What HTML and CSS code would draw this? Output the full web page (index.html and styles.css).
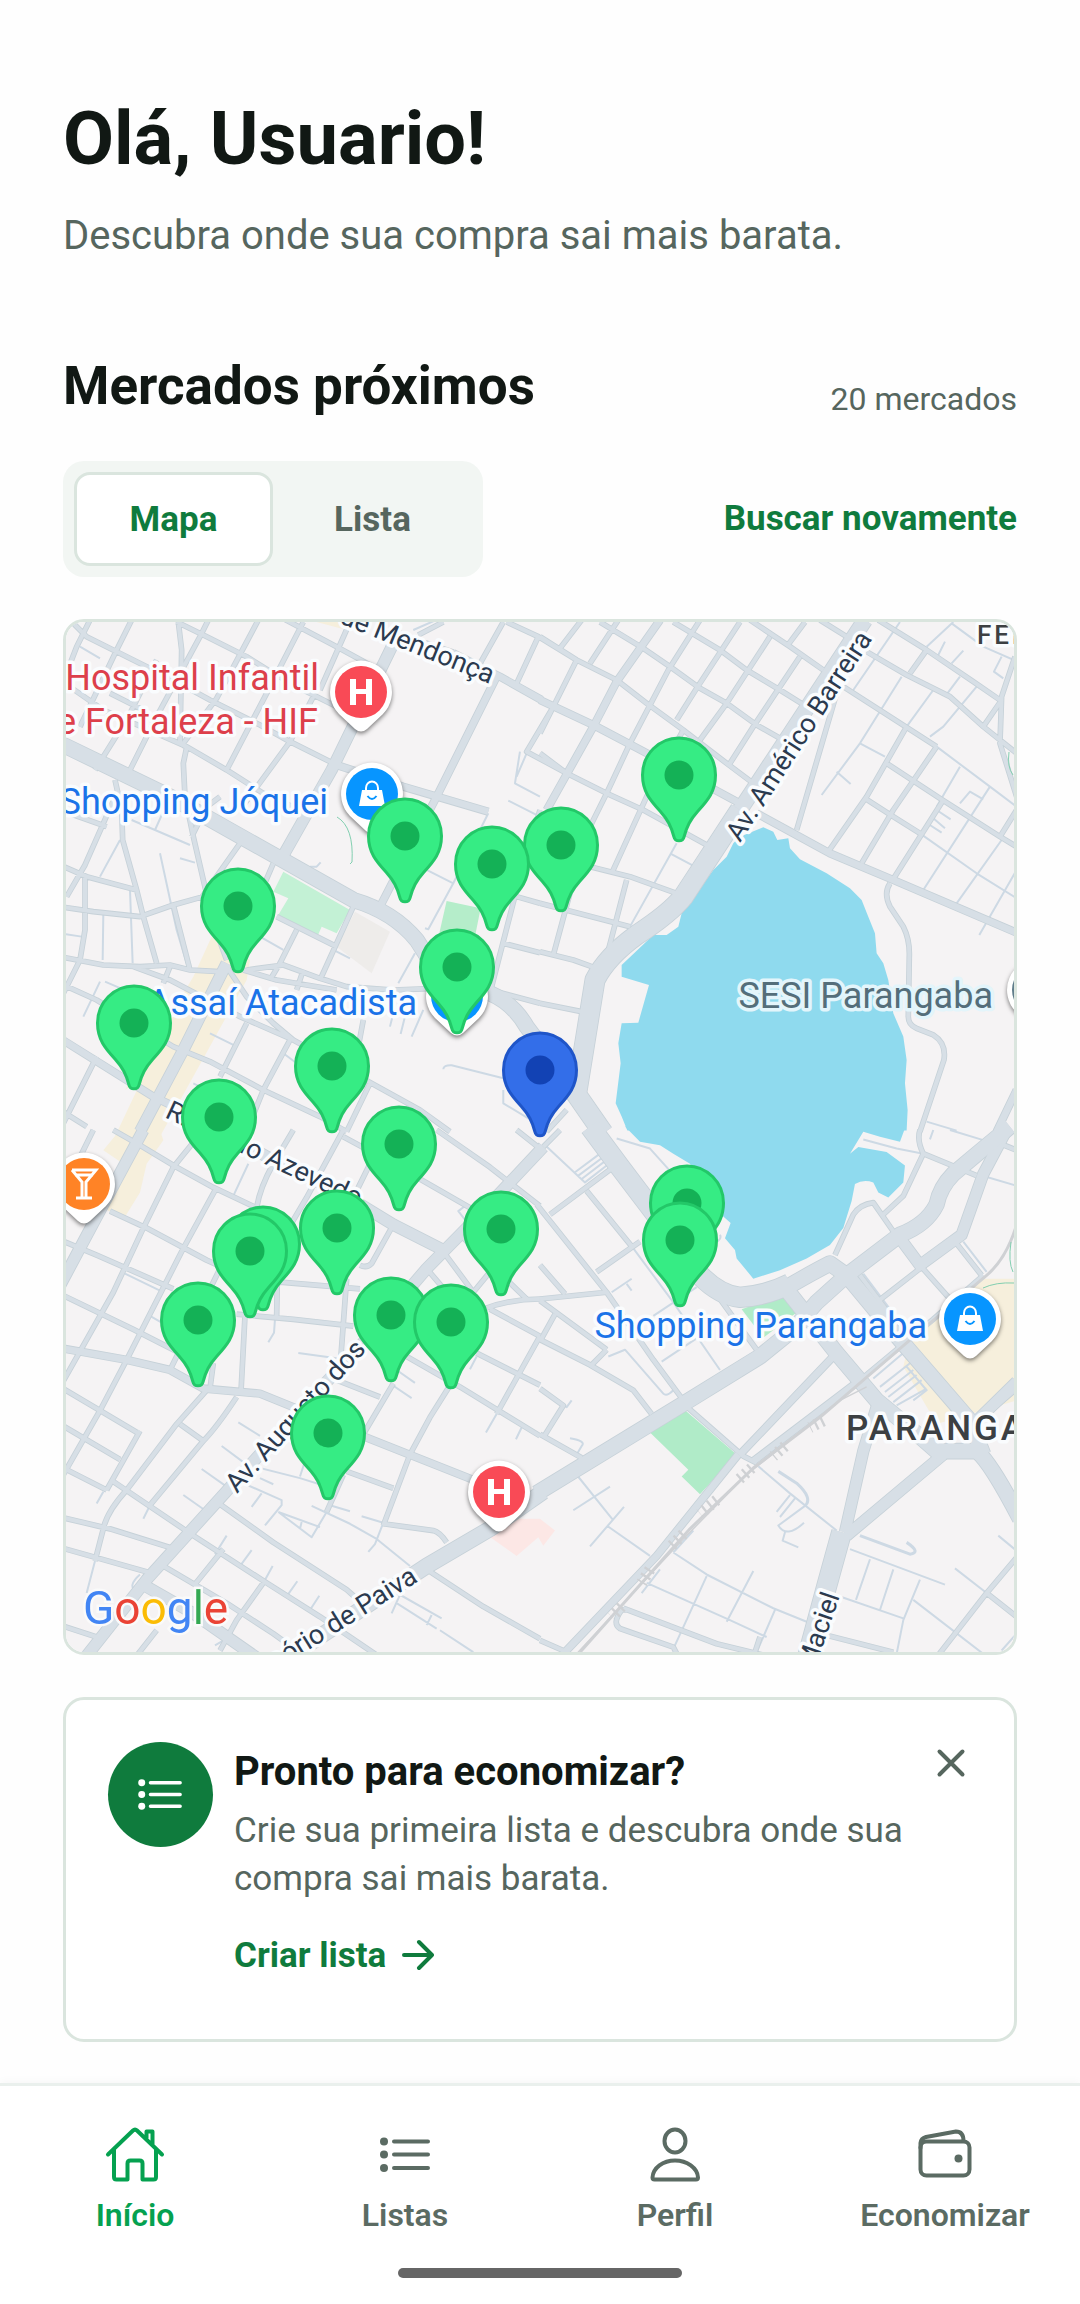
FILE: index.html
```html
<!DOCTYPE html>
<html lang="pt-BR">
<head>
<meta charset="utf-8">
<meta name="viewport" content="width=device-width, initial-scale=1">
<title>Início</title>
<link rel="stylesheet" href="styles.css">
</head>
<body>
<main class="content">
  <header class="greeting">
    <h1 class="greeting-title">Olá, Usuario!</h1>
    <p class="greeting-text">Descubra onde sua compra sai mais barata.</p>
  </header>

  <section class="markets">
    <div class="markets-head">
      <h2 class="markets-title">Mercados próximos</h2>
      <span class="markets-count">20 mercados</span>
    </div>
    <div class="markets-tools">
      <div class="segment">
        <button class="segment-button is-active" type="button" aria-pressed="true">Mapa</button>
        <button class="segment-button" type="button" aria-pressed="false">Lista</button>
      </div>
      <button class="text-button" type="button">Buscar novamente</button>
    </div>

    <div class="map">
      <svg class="map-canvas" viewBox="0 0 948 1030" role="img" aria-label="Mapa dos mercados próximos">
        <defs>
          <g id="roads">
            <!-- north-west -->
            <g transform="translate(-6 -12) scale(.3333)">
              <path class="r1" d="M0 0L80 80 170 125 340 210 450 270 600 345 690 395 820 460M350 36L430 75 560 140 640 190 730 240 900 325M640 10L830 110 940 170M0 210L130 300 380 410 500 480 610 550 720 600M0 240L50 110 90 30M60 350L170 120 215 30M105 480L205 320 290 150M210 480L290 320 420 80 445 30M370 400L470 265 595 30M500 480L620 250 730 36M540 600L690 395 760 260M780 240L870 36M355 36L365 120 360 400 380 412 370 460 375 560 400 680 430 810 460 940 500 1050M250 300L150 250M165 510L185 600 188 690 230 840 250 920 290 1060M0 890L100 905 240 920 340 885 430 860M20 860L75 765 130 640 165 560M0 765L80 800 230 840M75 800L75 960 60 1050 0 1170M0 600L140 650M0 1040L130 1065 240 1070 330 1065 390 1080 480 1085M340 885L390 1080M395 680L440 590 480 560M540 700L420 870M560 1080L670 1065 780 1105 860 1130 1000 1140 1130 1135M550 1080L650 1110 830 1140M650 920L830 1010M880 890L780 1110M710 960L660 1060 630 1110M730 1080L710 1140M220 1070L330 1110 540 1220 700 1290 880 1390 1080 1500 1170 1565M0 1120L110 1170 340 1310 450 1355 610 1440 780 1520 860 1565M500 1070L560 1160 640 1240 700 1290M330 1070L310 1120M560 1240L480 1400M690 1290L610 1440 560 1565M930 1420L860 1565M910 1230L880 1390M110 1340L0 1560M640 760L610 830M1330 36L1255 170M1075 75L1150 36M1290 1150L1380 800 1440 600M1370 860L1440 880M1330 1000L1440 1028M1290 1140L1440 1180M0 1500L80 1550"/>
              <path class="r2" d="M0 1285L280 1460 500 1565M1310 200L1130 560 960 890M830 465L1030 530 1285 605M1180 130L1320 200 1445 270M1000 70L1180 130"/>
              <path class="r3" d="M1020 60L815 480 665 745M500 1060L370 1320 240 1565"/>
              <path class="r4" d="M0 400L330 560 650 740 880 870Q1000 905 1070 990L1140 1100 1290 1150Q1360 1180 1400 1250L1445 1310"/>
            </g>
            <!-- north-east -->
            <g transform="translate(474 -12) scale(.3333)">
              <path class="r1" d="M-100 36L-5 80 110 150 230 210 320 280 430 360 560 460 640 520M-5 80L-70 220M110 150L40 290 -40 425 80 490 200 550 310 600 510 710M0 80L110 150M180 36L310 115 390 170 480 235 560 280 650 345 720 385M125 30L60 115M235 30L150 160M480 30L385 180 270 400 200 550 150 650M600 36L470 235 410 330M690 80L560 280 480 390M795 36L740 110M780 140L640 350 570 460M400 36L540 120 620 180 720 240 800 290M630 30L750 110 850 180M840 30L920 80M430 360L320 560 215 790M0 430L80 490M40 290L0 370M890 250L770 660M1015 30L1160 120 1300 215 1380 270M980 125L1100 195 1230 260 1330 350 1430 430M910 230L1050 320 1190 410M1190 410L1060 600 965 760M1100 350L980 560 865 725M1160 120L1110 190M1040 460L1200 565 1380 680 1430 710M975 565L1060 620 1140 670M1210 570L1055 815M1430 600L1380 680M1385 270L1330 350M1425 140L1385 260 1380 400 1430 560M150 770L270 800 410 850M0 880L270 950M0 1025L100 1050 170 1075M0 1180L125 1205M90 850L40 1035M260 810L200 1040M110 760L60 900M1050 820Q1030 850 1050 890L1090 950Q1110 990 1108 1040L1105 1220Q1105 1245 1130 1255L1180 1275Q1220 1300 1212 1350L1140 1565M20 1565L80 1500"/>
              <path class="r2" d="M0 270L160 345 340 440 600 580M360 30L230 215 160 350 20 600M650 610L870 730 1060 810 1430 968M1430 1440L1370 1565"/>
              <path class="r4" d="M975 30L600 600"/>
              <path class="r5" d="M600 600L430 860Q390 910 290 975 200 1040 165 1110L110 1450M100 1440L190 1570"/>
            </g>
            <!-- south-west -->
            <g transform="translate(-6 508) scale(.3333 .338)">
              <path class="r1" d="M150 240L260 290 440 385 530 425M0 325L110 370 340 470M0 485L220 590 360 660M160 0L240 45 350 110 460 170 600 235M0 760L120 830 240 900M0 870L180 975M0 995L140 1065M100 0L0 200M430 0L340 110 250 290 160 480 0 760M470 170L370 350 200 680 120 830 10 1020M560 250L420 530 330 710M590 230Q600 170 640 100L700 0M240 890L140 1065M440 770L350 870 200 1065Q140 1130 130 1180L105 1275M530 790Q470 880 430 920L270 1110M360 870L430 920M555 550L543 775M460 690L450 765M530 545L700 560 880 580M660 450L900 470M652 450L650 550M860 440L842 680M160 1040L400 1200 620 1340 780 1440 960 1560M470 1100L640 1220 860 1360 900 1395M0 1145L150 1180 345 1240M0 1235L270 1310M0 1465L110 1500M310 1290L500 1400 640 1490 750 1568M490 1240L400 1350M610 1340L530 1450 480 1540M290 1480L220 1568M830 740L960 790M1000 750L910 900M1180 740L1110 850 1050 960 970 1170M860 1010L1000 1060M970 1165L1120 1185Q1140 1190 1160 1220M850 1020L800 1130M1150 360L1240 480M1130 0L1290 110 1440 225M850 20L1000 100 1230 230M850 0L740 200 680 300M1000 280L935 395Q920 410 900 400M930 100L880 200M1240 480L1290 420M1270 530Q1350 500 1440 500M1290 530L1440 610M1250 660L1440 755M1040 670L1200 760 1440 905M1440 610L1310 840M1200 310L1400 500M1100 1300L1270 1410 1440 1505M1100 410L1160 480M1370 0L1440 55"/>
              <path class="r2" d="M0 645L200 680 330 710 430 765 600 780 700 820 920 910 1060 965 1240 1035"/>
              <path class="r3" d="M250 0L130 220 0 460M480 0L640 90 850 190 1000 280 1150 355M1450 50L1250 260 1100 410 900 640 700 850 480 1090 260 1330 70 1568M240 1340L400 1430 600 1568"/>
              <path class="r4" d="M640 1590L900 1420 1100 1290 1290 1180 1450 1070"/>
            </g>
            <!-- south-east -->
            <g transform="translate(474 508) scale(.3333 .338)">
              <path class="r1" d="M220 110L30 250M140 180L280 350M300 330L170 420M-10 220L200 480 340 680 430 800M0 500L200 480M0 400L75 485M0 505L200 650M0 620L150 695 280 770 335 840M200 650L150 700M0 765L70 815 10 910M0 900L125 970M45 545L0 625M540 500L650 650M885 370L940 250Q960 220 1000 215L1060 300M1140 0Q1130 30 1150 70L1090 195 1030 250M1150 70L1310 135M1140 400L1230 500M1010 510L1140 410M1245 330L1325 430M430 810L610 965 650 985M960 740L1180 560 1330 430M960 430L1060 560M265 1420L245 1420Q215 1460 240 1475L400 1530 420 1568M250 1415L530 1520 730 1568M1430 1265L1340 1370 1190 1560M1340 1370L1430 1440M0 1510L70 1540M660 1500L640 1560M860 1495L1060 1545M1380 40L1430 60M10 50L60 0"/>
              <path class="r2" d="M595 960L350 1260 60 1560M880 670L600 960M960 740L640 980M1430 760L1300 870"/>
              <path class="r3" d="M1400 0L1330 130 1265 310 1140 400 1080 320M1010 820L970 950 915 1190M1210 960L920 1200M1430 745L1290 880"/>
              <path class="r4" d="M730 460L890 660 1010 800Q1110 880 1190 950H1310Q1350 980 1440 1150M920 430L1080 620 1290 860 1330 960M-10 1075L430 810 660 670 760 590 830 510 920 430 1080 310Q1160 280 1190 220 1200 170 1240 130L1300 80 1410 -10M750 460Q820 420 870 395L920 430"/>
              <path class="r5" d="M150 -10L240 110 340 240 480 430Q540 490 600 495 680 490 750 455M905 1190L860 1350 800 1568"/>
            </g>
          </g>

          <g id="pin">
            <path d="M0-37C20-37 36.500-20.500 36.500 0 36.500 17 28 26 19 36 11 45 8 51 5 62 4 67-4 67-5 62-8 51-11 45-19 36-28 26-36.500 17-36.500 0-36.500-20.500-20-37 0-37Z"/>
            <circle class="pin-eye" r="14.500"/>
          </g>
          <path id="poi" d="M0-31.500A31.500 31.500 0 0 1 22 22L6 37Q0 42-6 37L-22 22A31.500 31.500 0 0 1 0-31.500Z"/>
          <g id="bag">
            <circle r="26"/>
            <path fill="#fff" d="M-10-4H10L13 12H-13Z"/>
            <path class="bag-line" stroke="#fff" d="M-6-4V-6A6 6.500 0 0 1 6-6V-4"/>
            <path class="bag-line" stroke="#0795ff" d="M-4.500 2Q0 8 4.500 2"/>
          </g>
        </defs>

        <rect class="ground" width="948" height="1030"/>

        <!-- parks, shopping areas and the lake -->
        <g transform="translate(-6 -12) scale(.3333)">
          <path fill="#c3f1d5" d="M670 785L870 900 830 970 785 950 770 985 655 915 685 865 640 845Z"/>
          <path fill="#b5edca" d="M1160 873L1262 895 1245 980 1138 970Z"/>
          <path fill="#eeecea" d="M885 905L990 965 935 1090 830 1010Z"/>
          <path fill="#f6efdc" d="M455 980L570 1050 560 1110 400 1400 300 1580H165L250 1400 195 1440 400 1100ZM770 36H860V60Z"/>
        </g>
        <g transform="translate(-6 508) scale(.3333 .338)">
          <path fill="#f6efdc" d="M180 0H300L310 30 260 100 240 185 190 265 130 230 190 100 130 60Z"/>
          <path fill="#fce7e5" d="M1270 1190L1340 1150 1440 1150 1485 1185 1450 1230 1435 1205 1370 1260Z"/>
        </g>
        <g transform="translate(474 508) scale(.3333 .338)">
          <path fill="#b0ebc8" d="M320 885L430 825 590 960 480 1078 425 1025 445 1005ZM605 530L725 488 770 540 670 615Z"/>
          <path fill="#f6efdc" d="M1330 440H1430V800L1190 870 1090 700 1110 620Z"/>
          <path fill="#8fdaee" d="M1097-10L1080 35 1020 20 970 5 930 70 955 50 1040 65 1095 105 1090 155 1045 200 1015 185 1000 155Q970 145 945 160L935 210 910 290 870 340 800 380 720 415 640 440 590 380 585 355 555 320 572 275 520 230 450 100 400 70 360 45 300 35 255-10Z"/>
        </g>
        <path transform="translate(474 -12) scale(.3333)" fill="#8fdaee" d="M600 680L670 652 700 665 712 690 745 685 750 715 780 748 860 790 930 835 965 870 985 920 1005 970 1010 1030 1030 1060 1045 1110 1060 1210 1090 1280 1100 1350 1095 1420 1103 1500 1100 1562H262L245 1520 227 1480 242 1360 235 1300 245 1240 295 1238 327 1125 245 1100V1065L340 975H380L415 950 425 910 520 780 560 740 580 700Z"/>

        <!-- narrow lanes -->
        <g class="lanes">
          <g transform="translate(-6 -12) scale(.3333)">
            <path d="M60 110L120 145M180 690L120 800M300 730L350 960 380 1060M360 745L405 758M215 630L390 705M330 560L285 660M210 840L218 1060M130 910L128 1050M0 970L65 980M600 980L670 1020M820 1020L870 1045M1100 780L1180 820 1105 958 1095 955M1285 610L1180 820M1380 425L1365 520 1440 560M1400 430L1370 500M1345 572L1440 620M750 770H770L782 757M120 1115L70 1220M135 1115L240 1160M450 1270L520 1305M670 1330L710 1360M1065 1030L1015 1120M1005 1190L990 1250M1040 1200L1022 1272M1090 1200L1055 1280M1150 1378Q1150 1365 1175 1366L1330 1405M1330 1440V1480L1430 1540M400 1420L480 1460M1060 60L1220 -10"/>
          </g>
          <g transform="translate(474 -12) scale(.3333)">
            <path d="M1080 36L940 240M1085 200L960 400 845 555M960 400L1035 440M890 485L932 522M1240 36L1160 110M1215 95L1195 135M1235 40L1330 110 1422 150M1385 140L1362 185 1390 205M1270 122L1235 160M1190 410L1350 530 1430 590M1350 530L1150 840M1140 670L1310 790 1430 865M1430 780L1318 975M1385 690L1250 880M1310 230L1210 350 1170 380M1260 200L1215 260M1180 240L1100 350M1260 470L1190 590M1260 580L1290 545 1330 568M1190 600L1232 628M1180 625L1215 655M1165 642L1205 668M410 700L270 950M390 730L465 770M1160 1535L1250 1562"/>
          </g>
          <g transform="translate(-6 508) scale(.3333 .338)">
            <path d="M565 100L520 195M195 425L300 475M270 550L340 590M645 560L642 600 625 628M715 660L830 675M535 865L600 905M485 935L560 990 720 1030 800 1055M425 1003L500 1055M370 1080L435 1125M550 1045L665 1095 665 1110 615 1170M600 1030L640 1048M605 1075L575 1115M655 1130L755 1205 800 1130M655 1130L780 1175M725 1160L720 1180M735 980L720 1025M755 1112L870 1165 950 1210 1050 1290M905 1143L970 1162 945 1225 925 1248M810 1110L870 1128M130 1070L110 1105M270 1110L250 1150M500 1200L465 1255M575 1243L540 1290M638 1290L610 1340M712 1335L680 1380M778 1378L750 1420M105 1275L80 1370M240 1315Q200 1350 230 1365M1020 1375L995 1430M1020 1375L1145 1445M1010 1400L1130 1475M1115 1435L1100 1465M1010 710L1065 748M990 750L1055 793M1310 840L1278 895M1385 880L1368 915M1250 670L1230 708M1215 225L1195 240 1215 265M1200 310L1240 350M465 1525L500 1505M1140 1480L1240 1545"/>
          </g>
          <g transform="translate(474 508) scale(.3333 .338)">
            <path d="M230 25L330 55 380 110 430 170M10 40L135 155 200 105M105 125L180 70M115 135L190 80M125 145L198 90M280 350L400 510 540 710M215 480L275 440M260 455L275 475M340 550L470 465M365 685L480 610M540 310Q550 330 500 340M205 670L255 650 370 780Q380 790 400 770M95 800L80 820 65 812M90 912Q140 920 125 935L110 960M110 1020L220 1155M200 1170L330 1260M210 1055L100 1125M252 1115L150 1232M655 995L750 1075 890 1185M750 1080L710 1130M765 1090L720 1145M795 1112L715 1170Q740 1210 792 1162M735 1190L728 1215 775 1235M400 1250L500 1315 700 1415 800 1455M320 1340L570 1450 680 1500M500 1320L400 1535M640 1305L560 1455M705 1420L650 1545M930 1240L1215 1345M900 1380L1090 1445M990 1270L948 1390M1060 1300L1020 1420M1140 1330L1090 1450 1070 1550M1120 1390L1330 1550M1245 1297L1340 1370M1375 1200L1430 1245M1385 1540L1430 1490M970 28L1070 55 1150 70M1310 130L1430 165M1180 0L1170 28M1230 0L1330 30M970 425L1050 530M1270 330L1340 420M400 1250L460 1185M305 1370L360 1300M1000 735L1090 660M1020 760L1110 690M1035 775L1120 710M1045 790L1130 725M1060 805L1145 740M1070 815L1160 765M1100 700L1160 770 1120 800"/>
            <path stroke-width="9" d="M715 1010L770 1045Q820 1090 795 1112M960 1200L1110 1255Q1145 1250 1100 1220"/>
          </g>
        </g>

        <use class="road-edge" href="#roads"/>
        <use class="road-fill" href="#roads"/>

        <!-- railway and footpaths -->
        <g class="rail" transform="translate(474 508) scale(.3333 .338)">
          <path d="M1430 280Q1400 380 1340 430L1100 630 840 850 640 1000 450 1180 120 1545"/>
          <path class="rail-thin" d="M980 760L900 800 620 1020 430 1210 100 1560"/>
          <path class="rail-ties" d="M850 860L810 880M735 935L700 965M635 1000L590 1040M530 1095L480 1135M430 1195L390 1235M330 1300L305 1340M245 1410L215 1440"/>
        </g>
        <path class="trail" d="M271 195Q288 205 286 240L284 242M943 130Q941 145 947 153M917 666Q930 660 948 661M945 620Q942 640 947 650"/>

        <!-- street names -->
        <g class="street">
          <text text-anchor="end" transform="translate(424 62) rotate(22)">de Mendonça</text>
          <text transform="translate(674 221) rotate(-57)">Av. Américo Barreira</text>
          <text transform="translate(98 495) rotate(25)">R. Inácio Azevedo</text>
          <text transform="translate(171 872) rotate(-48)">Av. Augusto dos Anjos</text>
          <text text-anchor="end" transform="translate(353 959) rotate(-32)">Av. Osório de Paiva</text>
          <text text-anchor="end" transform="translate(774 974) rotate(-71)">Maciel</text>
        </g>

        <!-- places -->
        <g class="place" text-anchor="end">
          <text class="is-health" x="253" y="68">Hospital Infantil</text>
          <text class="is-health" x="252" y="112">de Fortaleza - HIF</text>
          <text class="is-shop" x="262" y="192">Shopping Jóquei</text>
          <text class="is-shop" x="351" y="393">Assaí Atacadista</text>
          <text class="is-shop" x="861" y="716">Shopping Parangaba</text>
          <text class="is-civic" x="927" y="386">SESI Parangaba</text>
        </g>
        <g class="district">
          <text x="780" y="818">PARANGABA</text>
          <text class="is-small" x="911" y="22">FER</text>
        </g>

        <g class="poi-shapes">
          <use href="#poi" x="295" y="70"/>
          <use href="#poi" x="306" y="172"/>
          <use href="#poi" x="391" y="374"/>
          <use href="#poi" x="904" y="697"/>
          <use href="#poi" x="433" y="870"/>
          <use href="#poi" x="18" y="562"/>
          <use href="#poi" x="972" y="368"/>
        </g>
        <g fill="#0795ff">
          <use href="#bag" x="306" y="172"/>
          <use href="#bag" x="391" y="374"/>
          <use href="#bag" x="904" y="697"/>
        </g>
        <g fill="#f94a56">
          <circle cx="295" cy="70" r="26"/>
          <circle cx="433" cy="870" r="26"/>
        </g>
        <g fill="#fff">
          <path id="cross" d="M284 57H290V67H300V57H306V83H300V72H290V83H284Z"/>
          <use href="#cross" x="138" y="800"/>
        </g>
        <circle cx="18" cy="562" r="26" fill="#ff8326"/>
        <path class="glass" d="M6 548H30L20 560V575M6 548L16 560V575M9 553H27M10 576H26"/>
        <circle cx="972" cy="368" r="26" fill="#607d8b"/>

        <text class="attribution" x="17" y="1002"><tspan fill="#4285f4">G</tspan><tspan fill="#ea4335">o</tspan><tspan fill="#fbbc05">o</tspan><tspan fill="#4285f4">g</tspan><tspan fill="#34a853">l</tspan><tspan fill="#ea4335">e</tspan></text>

        <!-- markets -->
        <g class="pins">
          <use href="#pin" x="613" y="153"/>
          <use href="#pin" x="339" y="214"/>
          <use href="#pin" x="495" y="223"/>
          <use href="#pin" x="426" y="242"/>
          <use href="#pin" x="172" y="284"/>
          <use href="#pin" x="391" y="345"/>
          <use href="#pin" x="68" y="401"/>
          <use href="#pin" x="266" y="444"/>
          <use class="pin-me" href="#pin" x="474" y="448"/>
          <use href="#pin" x="153" y="495"/>
          <use href="#pin" x="333" y="522"/>
          <use href="#pin" x="621" y="581"/>
          <use href="#pin" x="271" y="606"/>
          <use href="#pin" x="435" y="607"/>
          <use href="#pin" x="614" y="618"/>
          <use href="#pin" x="197" y="622"/>
          <use href="#pin" x="184" y="629"/>
          <use href="#pin" x="325" y="693"/>
          <use href="#pin" x="132" y="698"/>
          <use href="#pin" x="385" y="700"/>
          <use href="#pin" x="262" y="811"/>
        </g>
      </svg>
    </div>
  </section>

  <section class="card">
    <span class="card-badge">
      <svg class="card-badge-icon" viewBox="0 0 63 63" aria-hidden="true">
        <path d="M20 18H54M20 31.500H54M20 45H54"/>
        <g class="dots"><circle cx="10" cy="18" r="4"/><circle cx="10" cy="31.500" r="4"/><circle cx="10" cy="45" r="4"/></g>
      </svg>
    </span>
    <div class="card-body">
      <h3 class="card-title">Pronto para economizar?</h3>
      <p class="card-text">Crie sua primeira lista e descubra onde sua compra sai mais barata.</p>
      <a class="card-link" href="#criar">Criar lista
        <svg class="card-arrow" viewBox="0 0 32 32" aria-hidden="true"><path d="M2 16H30M17 3L30 16 17 29"/></svg>
      </a>
    </div>
    <button class="card-close" type="button" aria-label="Fechar">
      <svg viewBox="0 0 42 42" aria-hidden="true"><path d="M9.500 9.500L32.500 32.500M32.500 9.500L9.500 32.500"/></svg>
    </button>
  </section>
</main>

<nav class="tabbar">
  <div class="tabs">
    <a class="tab is-current" href="#inicio" aria-current="page">
      <svg class="tab-icon" viewBox="0 0 63 63" aria-hidden="true"><path d="M4 31.500L29 7.500Q31 5.500 33 7.500L58 31.500M10 27V54Q10 56.500 12.500 56.500H23.500V40.500Q23.500 37.500 26.500 37.500H35.500Q38.500 37.500 38.500 40.500V56.500H49.500Q52 56.500 52 54V27M42.500 15V8.500H48.500V21"/></svg>
      <span>Início</span>
    </a>
    <a class="tab" href="#listas">
      <svg class="tab-icon" viewBox="0 0 63 63" aria-hidden="true"><path d="M20 18.500H54M20 31.500H54M20 45H54"/><g class="dots"><circle cx="10" cy="18.500" r="4"/><circle cx="10" cy="31.500" r="4"/><circle cx="10" cy="45" r="4"/></g></svg>
      <span>Listas</span>
    </a>
    <a class="tab" href="#perfil">
      <svg class="tab-icon" viewBox="0 0 63 63" aria-hidden="true"><ellipse cx="31" cy="18" rx="10.500" ry="11.500"/><path d="M8.500 54.500C9 45 19 37.500 31 37.500S53.500 45 54 54.500Q54 56.500 52 56.500H10.500Q8.500 56.500 8.500 54.500Z"/></svg>
      <span>Perfil</span>
    </a>
    <a class="tab" href="#economizar">
      <svg class="tab-icon" viewBox="0 0 63 63" aria-hidden="true"><rect x="6.500" y="18.500" width="49" height="34" rx="6"/><path d="M6.500 25V20Q7 15.500 12 14L42 8.500Q49.500 8.500 49.500 18"/><g class="dots"><circle cx="44.500" cy="35.500" r="4"/></g></svg>
      <span>Economizar</span>
    </a>
  </div>
  <div class="home-indicator"></div>
</nav>
</body>
</html>
```
FILE: styles.css
```css
:root {
  --ink: #111814;
  --muted: #56665e;
  --brand: #0f7b3d;
  --line: #dae5de;
}

* {
  box-sizing: border-box;
}

body {
  margin: 0;
  min-height: 100vh;
  display: flex;
  flex-direction: column;
  background: #fefefe;
  color: var(--ink);
  font-family: Roboto, "Liberation Sans", sans-serif;
}

h1, h2, h3, p {
  margin: 0;
}

button {
  padding: 0;
  border: 0;
  background: none;
  font: inherit;
  cursor: pointer;
}

svg {
  display: block;
}

.content {
  flex: 1;
  display: flex;
  flex-direction: column;
  gap: 42px;
  padding: 95px 63px 41px;
}

.greeting {
  display: flex;
  flex-direction: column;
  gap: 25px;
  margin-bottom: 48px;
}

.greeting-title {
  font-size: 74px;
  line-height: 88px;
  font-weight: 700;
}

.greeting-text {
  color: var(--muted);
  font-size: 40px;
  line-height: 56px;
}

.markets {
  display: flex;
  flex-direction: column;
  gap: 42px;
}

.markets-head,
.markets-tools {
  display: flex;
  justify-content: space-between;
}

.markets-head {
  align-items: flex-end;
}

.markets-tools {
  align-items: center;
}

.markets-title {
  font-size: 53px;
  line-height: 65px;
  font-weight: 700;
}

.markets-count {
  color: var(--muted);
  font-size: 32px;
  line-height: 40px;
}

.segment {
  display: flex;
  padding: 11px;
  border-radius: 21px;
  background: #f2f6f3;
}

.segment-button {
  width: 199px;
  height: 94px;
  border: 3px solid transparent;
  border-radius: 16px;
  color: var(--muted);
  font-size: 35px;
  font-weight: 700;
}

.segment-button.is-active {
  border-color: var(--line);
  background: #fff;
  color: var(--brand);
}

.text-button {
  color: var(--brand);
  font-size: 35px;
  line-height: 48px;
  font-weight: 700;
}

/* Map */

.map {
  overflow: hidden;
  border: 3px solid var(--line);
  border-radius: 21px;
}

.map-canvas {
  width: 100%;
  height: auto;
}

.ground {
  fill: #f5f3f4;
}

.road-edge,
.road-fill,
.lanes,
.rail,
.trail {
  fill: none;
  stroke-linejoin: round;
}

.road-edge {
  --edge: 5px;
  stroke: #c6d1d8;
}

.road-fill {
  --edge: 0px;
  stroke: #d7dfe6;
}

.r1 { stroke-width: calc(12px + var(--edge)); }
.r2 { stroke-width: calc(20px + var(--edge)); }
.r3 { stroke-width: calc(32px + var(--edge)); }
.r4 { stroke-width: calc(44px + var(--edge)); }
.r5 { stroke-width: calc(58px + var(--edge)); }

.lanes {
  stroke: #cdd9e4;
  stroke-width: 6px;
}

.rail {
  stroke: #cfd1d4;
  stroke-width: 9px;
}

.rail-thin {
  stroke-width: 4px;
}

.rail-ties {
  stroke-width: 34px;
  stroke-dasharray: 7 14;
}

.trail {
  stroke: #82cfb0;
  stroke-width: 1px;
}

.street,
.place,
.district {
  paint-order: stroke;
  stroke: #fafcfe;
  stroke-width: 7px;
  stroke-linejoin: round;
}

.street {
  fill: #2b3a4f;
  font-size: 27px;
}

.place {
  font-size: 36px;
}

.is-health { fill: #dd3f4b; }
.is-shop { fill: #1a73e8; }
.is-civic {
  fill: #546e7a;
  stroke: #e3f5fb;
}

.district {
  fill: #3c4043;
  font-size: 35px;
  font-weight: 500;
  letter-spacing: 3px;
}

.district .is-small {
  font-size: 26px;
}

.poi-shapes {
  fill: #fff;
  filter: drop-shadow(0 2px 2px rgb(0 0 0 / 50%));
}

.bag-line,
.glass {
  fill: none;
  stroke-width: 2px;
}

.glass {
  stroke: #fff;
  stroke-width: 3px;
}

.attribution {
  font-family: Roboto, sans-serif;
  font-size: 46px;
  paint-order: stroke;
  stroke: #fafafa;
  stroke-width: 5px;
}

.pins {
  --eye: #14b156;
  fill: #36ec84;
  stroke: #23c868;
  stroke-width: 3px;
}

.pin-me {
  --eye: #1242b4;
  fill: #336ee9;
  stroke: #1f55c8;
}

.pin-eye {
  fill: var(--eye);
  stroke: none;
}

/* Prompt card */

.card {
  display: flex;
  align-items: flex-start;
  padding: 42px;
  border: 3px solid var(--line);
  border-radius: 21px;
  background: #fff;
}

.card-badge {
  flex: none;
  display: grid;
  place-items: center;
  width: 105px;
  height: 105px;
  border-radius: 50%;
  background: var(--brand);
}

.card-badge-icon {
  width: 55px;
  height: 55px;
  fill: none;
  stroke: #fff;
  stroke-width: 4px;
  stroke-linecap: round;
  color: #fff;
}

.card-body {
  flex: 1;
  padding: 4px 0 0 21px;
}

.card-title {
  font-size: 40px;
  line-height: 52px;
  font-weight: 700;
}

.card-text {
  margin: 9px 0 10px;
  color: var(--muted);
  font-size: 35px;
  line-height: 48px;
}

.card-link {
  display: inline-flex;
  align-items: center;
  gap: 16px;
  height: 84px;
  vertical-align: top;
  color: var(--brand);
  font-size: 35px;
  font-weight: 700;
  text-decoration: none;
}

.card-arrow {
  width: 32px;
  height: 32px;
}

.card-arrow,
.card-close svg {
  fill: none;
  stroke: currentColor;
  stroke-width: 4px;
  stroke-linecap: round;
  stroke-linejoin: round;
}

.card-close {
  flex: none;
  width: 42px;
  height: 42px;
  color: var(--muted);
}

/* Bottom navigation */

.tabbar {
  padding: 37px 0 26px;
  border-top: 3px solid #eaf0ed;
  background: #fff;
  box-shadow: 0 -2px 8px rgb(0 0 0 / 3%);
}

.tabs {
  display: flex;
}

.tab {
  flex: 1 1 0;
  display: flex;
  flex-direction: column;
  align-items: center;
  gap: 9px;
  color: #5b6b63;
  font-size: 32px;
  line-height: 40px;
  font-weight: 600;
  text-decoration: none;
}

.tab.is-current {
  color: #05a150;
}

.tab-icon {
  width: 63px;
  height: 63px;
  fill: none;
  stroke: currentColor;
  stroke-width: 4px;
  stroke-linecap: round;
  stroke-linejoin: round;
}

.dots {
  fill: currentColor;
  stroke: none;
}

.home-indicator {
  width: 284px;
  height: 10px;
  margin: 33px auto 0;
  border-radius: 5px;
  background: #666;
}
```
